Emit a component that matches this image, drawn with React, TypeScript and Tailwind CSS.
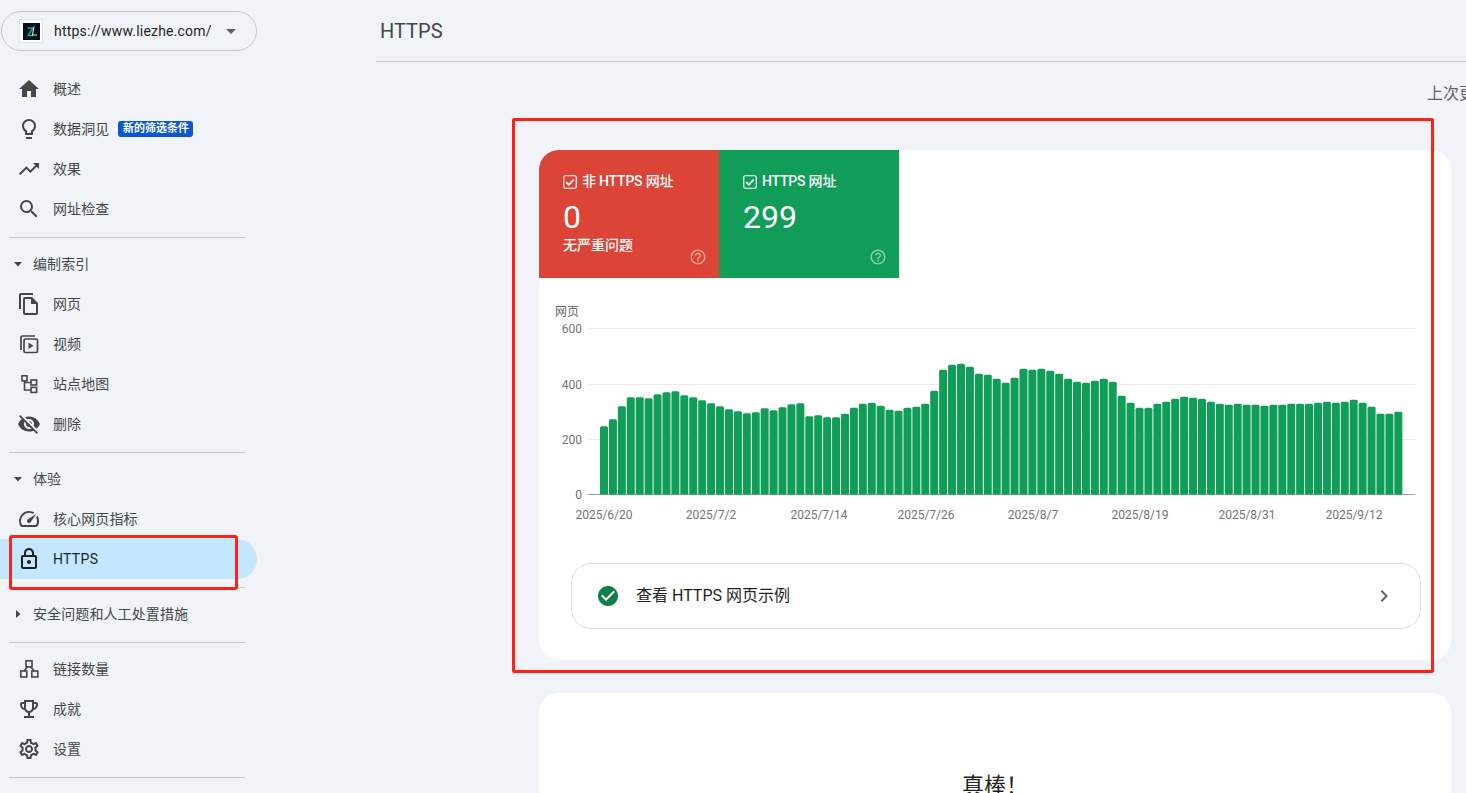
import React from "react";
import {
  MdCheckCircle,
  MdChevronRight,
  MdHelpOutline,
  MdHome,
  MdOutlineEmojiEvents,
  MdOutlineFileCopy,
  MdOutlineLightbulb,
  MdOutlineLock,
  MdOutlineSettings,
  MdOutlineSpeed,
  MdSearch,
  MdTrendingUp,
  MdVisibilityOff,
} from "react-icons/md";

// bar heights in px, read off the chart
const bars = [
  68.3, 75.3, 88.3, 97.3, 97.3, 96.3, 100.3, 102.3, 103.3, 99.3, 97.3, 94.3, 91.3, 88.3, 85.3,
  83.3, 81.3, 82.3, 86.3, 84.3, 87.3, 90.3, 91.3, 78.3, 79.3, 77.3, 77.3, 80.7, 86.7, 90.7, 91.7,
  88.7, 84.7, 83.7, 86.7, 87.7, 90.7, 103.7, 124.7, 129.7, 130.7, 127.7, 120.7, 119.7, 115.7,
  111.7, 116.7, 125.7, 124.7, 125.7, 123.7, 120.7, 115.7, 112.7, 111.7, 113.7, 115.7, 112.7, 98.7,
  91.7, 86.7, 86.7, 90.7, 92.7, 95.7, 97.7, 96.7, 95.7, 92.7, 90.7, 89.7, 90.7, 89.7, 89.7, 88.7,
  89.7, 89.7, 90.7, 90.7, 90.7, 91.7, 92.7, 91.7, 92.7, 94.7, 91.7, 87.7, 80.7, 80.7, 82.7,
];

const xLabels = [
  { x: 604, t: "2025/6/20" },
  { x: 711, t: "2025/7/2" },
  { x: 819, t: "2025/7/14" },
  { x: 926, t: "2025/7/26" },
  { x: 1033, t: "2025/8/7" },
  { x: 1140, t: "2025/8/19" },
  { x: 1247, t: "2025/8/31" },
  { x: 1354, t: "2025/9/12" },
];

const yLabels = [
  { y: 328.5, t: "600" },
  { y: 384.5, t: "400" },
  { y: 439.5, t: "200" },
];

function VideoIcon() {
  return (
    <svg width="24" height="24" viewBox="0 0 24 24" fill="none" stroke="currentColor" strokeWidth="1.7">
      <path d="M4 18V5.5A1.5 1.5 0 0 1 5.5 4H18" />
      <rect x="7" y="7" width="13.5" height="13.5" rx="1.5" />
      <path d="M11.5 10.5v6.5l5-3.2z" fill="currentColor" stroke="none" />
    </svg>
  );
}

function SitemapIcon() {
  return (
    <svg width="24" height="24" viewBox="0 0 24 24" fill="none" stroke="currentColor" strokeWidth="1.6">
      <rect x="5" y="3.8" width="5" height="5" />
      <rect x="14" y="8" width="5.6" height="5" />
      <rect x="14" y="15.4" width="5.6" height="5" />
      <path d="M7.5 9v9H14M7.5 10.5H14" />
    </svg>
  );
}

function LinksIcon() {
  return (
    <svg width="24" height="24" viewBox="0 0 24 24" fill="none" stroke="currentColor" strokeWidth="1.6">
      <rect x="9" y="3.8" width="6" height="6" />
      <rect x="3.8" y="14" width="6" height="6" />
      <rect x="14.8" y="14" width="6" height="6" />
      <path d="M10.5 9.8 7 14M13.5 9.8l3.8 4.2" />
    </svg>
  );
}

function Logo() {
  return (
    <div className="flex h-6 w-6 items-center justify-center border border-[#e3e3e3] bg-white">
      <svg width="17" height="17" viewBox="0 0 17 17">
        <rect width="17" height="17" fill="#06121c" />
        <path d="M4.5 5h5.5L5 12.5h5" fill="none" stroke="#12a8a0" strokeWidth="1.4" />
        <path d="M11 3.5 9.5 12h4.5" fill="none" stroke="#d8e8e8" strokeWidth="1.1" />
      </svg>
    </div>
  );
}

function Divider() {
  return <div className="mb-[6px] ml-[9px] mt-2 h-px w-[236px] bg-[#c4c7c5]" />;
}

function NavItem({ icon, label, children }: { icon: React.ReactNode; label: string; children?: React.ReactNode }) {
  return (
    <div className="flex h-10 items-center text-sm text-[#444746]">
      <span className="w-[53px] pl-[17px]">{icon}</span>
      <span className="tracking-[0.1px]">{label}</span>
      {children}
    </div>
  );
}

function Section({ label, open = true }: { label: string; open?: boolean }) {
  return (
    <div className="flex h-10 items-center text-sm text-[#444746]">
      <span className="flex w-[33px] justify-center pl-[5px] pr-[2px]">
        {open ? (
          <svg width="8" height="5" viewBox="0 0 8 5">
            <path d="M0 0h8L4 4.5z" fill="currentColor" />
          </svg>
        ) : (
          <svg width="5" height="8" viewBox="0 0 5 8">
            <path d="M0 0v8l4.5-4z" fill="currentColor" />
          </svg>
        )}
      </span>
      <span className="tracking-[0.1px]">{label}</span>
    </div>
  );
}

function TileCheck() {
  return (
    <svg width="14" height="14" viewBox="0 0 14 14" fill="none" className="mr-[5px] mt-[2px]">
      <rect x="0.75" y="0.75" width="12.5" height="12.5" rx="1.5" stroke="white" strokeWidth="1.2" />
      <path d="M3.2 7.2 5.8 9.8 10.8 4.6" stroke="white" strokeWidth="1.8" />
    </svg>
  );
}

function Sidebar() {
  return (
    <aside className="w-[376px] shrink-0 pr-[119px]">
      <div className="ml-px mt-[11px] flex h-10 w-[256px] items-center rounded-full border border-[#c4c7c5] pl-[17px]">
        <Logo />
        <span className="ml-[11px] text-sm tracking-[0.2px] text-[#1f1f1f]">https://www.liezhe.com/</span>
        <svg width="10" height="5" viewBox="0 0 10 5" className="ml-[14px]">
          <path d="M0 0h10L5 5z" fill="#5f6368" />
        </svg>
      </div>

      <nav className="mt-[18px]">
        <NavItem icon={<MdHome size={24} />} label="概述" />
        <NavItem icon={<MdOutlineLightbulb size={24} />} label="数据洞见">
          <span className="ml-[9px] flex h-4 w-[75px] items-center justify-center rounded-[3px] bg-[#0b57d0] text-[11px] font-bold text-white">
            新的筛选条件
          </span>
        </NavItem>
        <NavItem icon={<MdTrendingUp size={24} />} label="效果" />
        <NavItem icon={<MdSearch size={24} />} label="网址检查" />
        <Divider />
        <Section label="编制索引" />
        <NavItem icon={<MdOutlineFileCopy size={24} />} label="网页" />
        <NavItem icon={<VideoIcon />} label="视频" />
        <NavItem icon={<SitemapIcon />} label="站点地图" />
        <NavItem icon={<MdVisibilityOff size={24} />} label="删除" />
        <Divider />
        <Section label="体验" />
        <NavItem icon={<MdOutlineSpeed size={24} />} label="核心网页指标" />
        <div className="flex h-10 items-center rounded-r-full bg-[#c2e7ff] text-sm text-[#1f1f1f]">
          <span className="w-[53px] pl-[17px]">
            <MdOutlineLock size={24} />
          </span>
          <span className="tracking-[0.3px]">HTTPS</span>
        </div>
        <Divider />
        <Section label="安全问题和人工处置措施" open={false} />
        <Divider />
        <NavItem icon={<LinksIcon />} label="链接数量" />
        <NavItem icon={<MdOutlineEmojiEvents size={24} />} label="成就" />
        <NavItem icon={<MdOutlineSettings size={24} />} label="设置" />
        <Divider />
      </nav>
    </aside>
  );
}

function Chart() {
  return (
    <svg width="912" height="285" viewBox="539 278 912 285" className="block">
      <text x="555" y="316" className="fill-[#5f6368] text-xs">
        网页
      </text>
      {[328.5, 384.5, 439.5].map((y) => (
        <line key={y} x1="588" x2="1415" y1={y} y2={y} stroke="#ebebeb" />
      ))}
      <line x1="588" x2="1415" y1="494.5" y2="494.5" stroke="#9aa0a6" />
      {yLabels.map((l) => (
        <text key={l.t} x="582" y={l.y + 4} textAnchor="end" className="fill-[#70757a] text-xs">
          {l.t}
        </text>
      ))}
      <text x="582" y="498.5" textAnchor="end" className="fill-[#70757a] text-xs">
        0
      </text>
      {bars.map((h, i) => (
        <path
          key={i}
          fill="#0f9d58"
          d={`M${600 + i * 8.925} 494.5v${-(h - 1.5)}a1.5 1.5 0 0 1 1.5-1.5h5a1.5 1.5 0 0 1 1.5 1.5v${h - 1.5}z`}
        />
      ))}
      {xLabels.map((l) => (
        <text key={l.t} x={l.x} y="519" textAnchor="middle" className="fill-[#70757a] text-xs">
          {l.t}
        </text>
      ))}
    </svg>
  );
}

export default function App() {
  return (
    <div className="relative flex h-screen overflow-hidden bg-[#f0f4f9] font-[Roboto,'Noto_Sans_CJK_SC',sans-serif]">
      <Sidebar />

      <main className="min-w-0 flex-1">
        <div className="flex h-[62px] items-center border-b border-[#c4c7c5] pl-1 text-xl text-[#444746]">
          HTTPS
        </div>

        <div className="ml-[1051px] mt-5 h-6 whitespace-nowrap text-base leading-6 text-[#5f6368]">
          上次更新时间
        </div>

        <section className="ml-[163px] mt-[44px] h-[510px] w-[912px] overflow-hidden rounded-[20px] bg-white">
          <div className="flex h-[128px] w-[360px] text-white">
            <div className="relative w-[180px] bg-[#db4437] pl-6 pt-[21px]">
              <div className="flex h-5 items-center text-sm font-medium tracking-[-0.2px]">
                <TileCheck />
                非 HTTPS 网址
              </div>
              <div className="mt-[6px] h-10 text-[32px] leading-10">0</div>
              <div className="-mt-[2px] text-sm font-medium leading-5">无严重问题</div>
              <MdHelpOutline size={18} className="absolute bottom-3 right-3 opacity-50" />
            </div>
            <div className="relative w-[180px] bg-[#0f9d58] pl-6 pt-[21px]">
              <div className="flex h-5 items-center text-sm font-medium tracking-[-0.2px]">
                <TileCheck />
                HTTPS 网址
              </div>
              <div className="mt-[6px] h-10 text-[32px] leading-10">299</div>
              <MdHelpOutline size={18} className="absolute bottom-3 right-3 opacity-50" />
            </div>
          </div>

          <Chart />

          <div className="ml-8 flex h-[66px] w-[850px] items-center rounded-[20px] border border-[#dadce0] pl-6 pr-6">
            <MdCheckCircle size={24} className="text-[#0d7f4a]" />
            <span className="ml-4 flex-1 text-base text-[#1f1f1f]">查看 HTTPS 网页示例</span>
            <MdChevronRight size={24} className="text-[#5f6368]" />
          </div>
        </section>

        <section className="ml-[163px] mt-[33px] h-[300px] w-[912px] rounded-[20px] bg-white pt-[79px] text-center text-[22px] leading-7 text-[#1f1f1f]">
          真棒！
        </section>
      </main>

      {/* red annotation boxes drawn over the screenshot */}
      <div className="pointer-events-none absolute left-[512px] top-[118px] h-[555px] w-[922px] rounded-[2px] border-[3px] border-[#ff2116]" />
      <div className="pointer-events-none absolute left-[9px] top-[535px] h-[55px] w-[229px] rounded-[3px] border-[3px] border-[#ff2116]" />
    </div>
  );
}
